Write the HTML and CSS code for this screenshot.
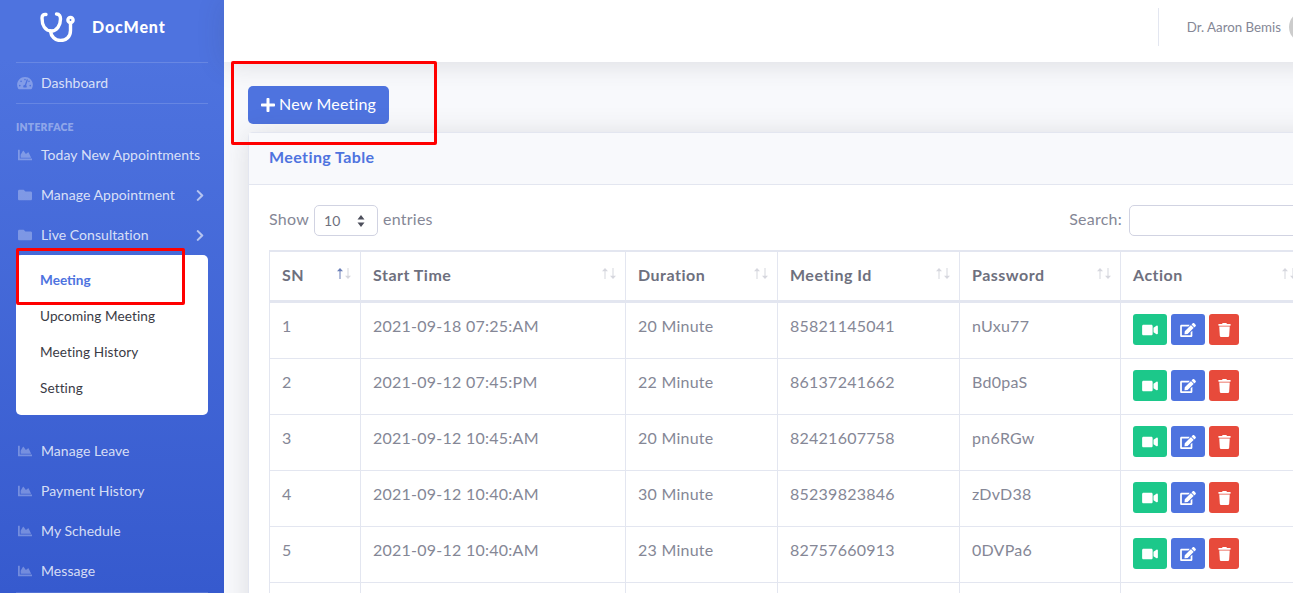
FILE: index.html
```html
<!DOCTYPE html>
<html>
<head>
<title>DocMent - Meeting</title>
<link rel="stylesheet" href="styles.css">
</head>
<body>
<svg class="sprite" xmlns="http://www.w3.org/2000/svg">
    <symbol id="i-gauge" viewBox="0 0 576 512"><path d="M288 32C128.94 32 0 160.94 0 320c0 52.8 14.25 102.26 39.06 144.8 5.61 9.62 16.3 15.2 27.44 15.2h443c11.14 0 21.83-5.58 27.44-15.2C561.75 422.26 576 372.8 576 320c0-159.06-128.94-288-288-288zm0 64c14.71 0 26.58 10.13 30.32 23.65-1.11 2.26-2.64 4.23-3.45 6.67l-9.22 27.67c-5.13 3.49-10.97 6.01-17.64 6.01-17.67 0-32-14.33-32-32S270.33 96 288 96zM96 384c-17.67 0-32-14.33-32-32s14.33-32 32-32 32 14.33 32 32-14.33 32-32 32zm48-160c-17.67 0-32-14.33-32-32s14.33-32 32-32 32 14.33 32 32-14.33 32-32 32zm246.77-72.41l-61.33 184C343.13 347.33 352 364.54 352 384c0 11.72-3.38 22.55-8.88 32H232.88c-5.5-9.45-8.88-20.28-8.88-32 0-33.94 26.5-61.43 59.9-63.59l61.34-184.01c4.17-12.56 17.73-19.45 30.36-15.17 12.57 4.19 19.35 17.79 15.17 30.36zm14.66 57.2l15.52-46.55c3.47-1.29 7.13-2.23 11.05-2.23 17.67 0 32 14.33 32 32s-14.33 32-32 32c-11.38-.01-20.89-6.28-26.57-15.22zM480 384c-17.67 0-32-14.33-32-32s14.33-32 32-32 32 14.33 32 32-14.33 32-32 32z"/></symbol>
    <symbol id="i-chart" viewBox="0 0 512 512"><path d="M500 384c6.6 0 12 5.4 12 12v40c0 6.6-5.4 12-12 12H12c-6.6 0-12-5.4-12-12V76c0-6.6 5.4-12 12-12h40c6.6 0 12 5.4 12 12v308h436zM372.7 159.5L288 216l-85.3-113.7c-5.1-6.8-15.5-6.3-19.9 1L96 248v104h384l-89.9-187.8c-3.2-6.5-11.4-8.7-17.4-4.7z"/></symbol>
    <symbol id="i-folder" viewBox="0 0 512 512"><path d="M464 128H272l-64-64H48C21.49 64 0 85.49 0 112v288c0 26.51 21.49 48 48 48h416c26.51 0 48-21.49 48-48V176c0-26.51-21.49-48-48-48z"/></symbol>
    <symbol id="i-chevron" viewBox="0 0 320 512"><path d="M285.476 272.971L91.132 467.314c-9.373 9.373-24.569 9.373-33.941 0l-22.667-22.667c-9.357-9.357-9.375-24.522-.04-33.901L188.505 256 34.484 101.255c-9.335-9.379-9.317-24.544.04-33.901l22.667-22.667c9.373-9.373 24.569-9.373 33.941 0L285.475 239.03c9.373 9.372 9.373 24.568.001 33.941z"/></symbol>
    <symbol id="i-plus" viewBox="0 0 448 512"><path d="M416 208H272V64c0-17.67-14.33-32-32-32h-32c-17.67 0-32 14.33-32 32v144H32c-17.67 0-32 14.33-32 32v32c0 17.67 14.33 32 32 32h144v144c0 17.67 14.33 32 32 32h32c17.67 0 32-14.33 32-32V304h144c17.67 0 32-14.33 32-32v-32c0-17.67-14.33-32-32-32z"/></symbol>
    <symbol id="i-video" viewBox="0 0 576 512"><path d="M336.2 64H47.8C21.4 64 0 85.4 0 111.8v288.4C0 426.6 21.4 448 47.8 448h288.4c26.4 0 47.8-21.4 47.8-47.8V111.8c0-26.4-21.4-47.8-47.8-47.8zm189.4 37.7L416 177.3v157.4l109.6 75.5c21.2 14.6 50.4-.3 50.4-25.8V127.5c0-25.4-29.1-40.4-50.4-25.8z"/></symbol>
    <symbol id="i-edit" viewBox="0 0 576 512"><path d="M402.6 83.2l90.2 90.2c3.8 3.8 3.8 10 0 13.8L274.4 405.6l-92.8 10.3c-12.4 1.4-22.9-9.1-21.5-21.5l10.3-92.8L388.8 83.2c3.8-3.8 10-3.8 13.8 0zm162-22.9l-48.8-48.8c-15.2-15.2-39.9-15.2-55.2 0l-35.4 35.4c-3.8 3.8-3.8 10 0 13.8l90.2 90.2c3.8 3.8 10 3.8 13.8 0l35.4-35.4c15.2-15.3 15.2-40 0-55.2zM384 346.2V448H64V128h229.8c3.2 0 6.2-1.3 8.5-3.5l40-40c7.6-7.6 2.2-20.5-8.5-20.5H48C21.5 64 0 85.5 0 112v352c0 26.5 21.5 48 48 48h352c26.5 0 48-21.5 48-48V306.2c0-10.7-12.9-16-20.5-8.5l-40 40c-2.2 2.3-3.5 5.3-3.5 8.5z"/></symbol>
    <symbol id="i-trash" viewBox="0 0 448 512"><path d="M432 32H312l-9.4-18.7A24 24 0 0 0 281.1 0H166.8a23.72 23.72 0 0 0-21.4 13.3L136 32H16A16 16 0 0 0 0 48v32a16 16 0 0 0 16 16h416a16 16 0 0 0 16-16V48a16 16 0 0 0-16-16zM53.2 467a48 48 0 0 0 47.9 45h245.8a48 48 0 0 0 47.9-45L416 128H32z"/></symbol>
    <symbol id="i-up" viewBox="0 0 6 11"><path d="M3 0l3 3.200H3.500V11h-1V3.200H0z"/></symbol>
    <symbol id="i-down" viewBox="0 0 6 11"><path d="M3 11L0 7.800h2.500V0h1v7.800H6z"/></symbol>
</svg>

<div class="wrapper">
    <nav class="sidebar">
        <a class="brand">
            <svg class="brand-logo" viewBox="0 0 36 30" fill="none" stroke="#fff" stroke-width="3.400" stroke-linecap="round"><path d="M6 2.500C3.500 2 2 3.500 2 6c0 7 3 13 9.500 13 5.500 0 9-6 9-12 0-3-1-5-4-5"/><path d="M10.500 19c.5 5.500 4.500 9.500 10 9.500 6 0 10-4 10-10v-7"/><circle cx="30.500" cy="8" r="2.600"/></svg>
            <span class="brand-text">DocMent</span>
        </a>
        <hr class="side-rule">
        <a class="side-link side-link-dash"><svg class="side-icon"><use href="#i-gauge"/></svg><span>Dashboard</span></a>
        <hr class="side-rule">
        <div class="side-heading">INTERFACE</div>
        <a class="side-link"><svg class="side-icon"><use href="#i-chart"/></svg><span>Today New Appointments</span></a>
        <a class="side-link"><svg class="side-icon"><use href="#i-folder"/></svg><span>Manage Appointment</span><svg class="side-arrow"><use href="#i-chevron"/></svg></a>
        <a class="side-link"><svg class="side-icon"><use href="#i-folder"/></svg><span>Live Consultation</span><svg class="side-arrow"><use href="#i-chevron"/></svg></a>
        <div class="side-sub">
            <a class="sub-link active">Meeting</a>
            <a class="sub-link">Upcoming Meeting</a>
            <a class="sub-link">Meeting History</a>
            <a class="sub-link">Setting</a>
        </div>
        <a class="side-link"><svg class="side-icon"><use href="#i-chart"/></svg><span>Manage Leave</span></a>
        <a class="side-link"><svg class="side-icon"><use href="#i-chart"/></svg><span>Payment History</span></a>
        <a class="side-link"><svg class="side-icon"><use href="#i-chart"/></svg><span>My Schedule</span></a>
        <a class="side-link"><svg class="side-icon"><use href="#i-chart"/></svg><span>Message</span></a>
        <hr class="side-rule side-rule-end">
    </nav>

    <div class="main">
        <header class="topbar">
            <div class="topbar-rule"></div>
            <span class="user-name">Dr. Aaron Bemis</span>
            <div class="avatar"></div>
        </header>
        <div class="content">
            <button class="btn-new"><svg class="btn-new-icon"><use href="#i-plus"/></svg><span class="btn-new-text">New Meeting</span></button>
            <div class="card">
                <div class="card-head">Meeting Table</div>
                <div class="card-body">
                    <div class="table-tools">
                        <label class="tool">Show
                            <span class="fake-select"><span>10</span>
                                <svg class="select-carets" viewBox="0 0 8 12"><path d="M4 0l3.500 4.500H.5zM4 12L.5 7.500h7z"/></svg>
                            </span>
                            entries</label>
                        <label class="tool tool-search">Search: <input class="search-box" type="text"></label>
                    </div>
                    <table class="data">
                        <colgroup>
                            <col class="c-sn"><col class="c-time"><col class="c-dur"><col class="c-id"><col class="c-pass"><col class="c-act">
                        </colgroup>
                        <thead>
                            <tr>
                                <th><div class="th-in">SN<span class="sort"><svg class="on"><use href="#i-up"/></svg><svg><use href="#i-down"/></svg></span></div></th>
                                <th><div class="th-in">Start Time<span class="sort"><svg><use href="#i-up"/></svg><svg><use href="#i-down"/></svg></span></div></th>
                                <th><div class="th-in">Duration<span class="sort"><svg><use href="#i-up"/></svg><svg><use href="#i-down"/></svg></span></div></th>
                                <th><div class="th-in">Meeting Id<span class="sort"><svg><use href="#i-up"/></svg><svg><use href="#i-down"/></svg></span></div></th>
                                <th><div class="th-in">Password<span class="sort"><svg><use href="#i-up"/></svg><svg><use href="#i-down"/></svg></span></div></th>
                                <th><div class="th-in">Action<span class="sort"><svg><use href="#i-up"/></svg><svg><use href="#i-down"/></svg></span></div></th>
                            </tr>
                        </thead>
                        <tbody>
                            <tr>
                                <td>1</td><td>2021-09-18 07:25:AM</td><td>20 Minute</td><td>85821145041</td><td>nUxu77</td>
                                <td><div class="acts"><a class="act act-go"><svg class="ic-video"><use href="#i-video"/></svg></a><a class="act act-edit"><svg class="ic-edit"><use href="#i-edit"/></svg></a><a class="act act-del"><svg class="ic-trash"><use href="#i-trash"/></svg></a></div></td>
                            </tr>
                            <tr>
                                <td>2</td><td>2021-09-12 07:45:PM</td><td>22 Minute</td><td>86137241662</td><td>Bd0paS</td>
                                <td><div class="acts"><a class="act act-go"><svg class="ic-video"><use href="#i-video"/></svg></a><a class="act act-edit"><svg class="ic-edit"><use href="#i-edit"/></svg></a><a class="act act-del"><svg class="ic-trash"><use href="#i-trash"/></svg></a></div></td>
                            </tr>
                            <tr>
                                <td>3</td><td>2021-09-12 10:45:AM</td><td>20 Minute</td><td>82421607758</td><td>pn6RGw</td>
                                <td><div class="acts"><a class="act act-go"><svg class="ic-video"><use href="#i-video"/></svg></a><a class="act act-edit"><svg class="ic-edit"><use href="#i-edit"/></svg></a><a class="act act-del"><svg class="ic-trash"><use href="#i-trash"/></svg></a></div></td>
                            </tr>
                            <tr>
                                <td>4</td><td>2021-09-12 10:40:AM</td><td>30 Minute</td><td>85239823846</td><td>zDvD38</td>
                                <td><div class="acts"><a class="act act-go"><svg class="ic-video"><use href="#i-video"/></svg></a><a class="act act-edit"><svg class="ic-edit"><use href="#i-edit"/></svg></a><a class="act act-del"><svg class="ic-trash"><use href="#i-trash"/></svg></a></div></td>
                            </tr>
                            <tr>
                                <td>5</td><td>2021-09-12 10:40:AM</td><td>23 Minute</td><td>82757660913</td><td>0DVPa6</td>
                                <td><div class="acts"><a class="act act-go"><svg class="ic-video"><use href="#i-video"/></svg></a><a class="act act-edit"><svg class="ic-edit"><use href="#i-edit"/></svg></a><a class="act act-del"><svg class="ic-trash"><use href="#i-trash"/></svg></a></div></td>
                            </tr>
                            <tr class="row-empty"><td></td><td></td><td></td><td></td><td></td><td></td></tr>
                        </tbody>
                    </table>
                </div>
            </div>
        </div>
    </div>
</div>

<div class="mark mark-btn"></div>
<div class="mark mark-menu"></div>
</body>
</html>
```

FILE: styles.css
```css
html, body {
    margin: 0;
    height: 100%;
    overflow: hidden;
}
body {
    font-family: Lato, "Noto Sans", sans-serif;
    font-size: 16px;
    line-height: 24px;
    color: #858796;
    background-color: #f8f9fc;
}
.sprite {
    display: none;
}
.wrapper {
    display: flex;
    width: 1340px;
    height: 593px;
    overflow: hidden;
}

/* sidebar */
.sidebar {
    flex: 0 0 224px;
    height: 593px;
    box-sizing: border-box;
    padding: 0 16px;
    overflow: hidden;
    background-image: linear-gradient(180deg, #4e73df 10%, #365ace 100%);
}
.brand {
    display: flex;
    align-items: center;
    height: 62px;
    padding: 0 0 8px 24px;
    box-sizing: border-box;
}
.brand-logo {
    width: 36px;
    height: 30px;
}
.brand-text {
    margin-left: 16px;
    font-size: 16px;
    font-weight: 900;
    letter-spacing: .85px;
    color: #fff;
}
.side-rule {
    margin: 0;
    border: 0;
    border-top: 1px solid rgba(255, 255, 255, .15);
}
.side-rule-end {
    margin-top: 1px;
}
.side-link {
    display: flex;
    align-items: center;
    height: 40px;
    font-size: 14px;
    letter-spacing: .05px;
    color: rgba(255, 255, 255, .8);
}
.side-icon {
    flex: none;
    width: 16px;
    height: 14px;
    margin: 0 8px 0 1px;
    fill: rgba(255, 255, 255, .3);
}
.side-arrow {
    width: 10px;
    height: 13px;
    margin-left: auto;
    margin-right: 3px;
    fill: rgba(255, 255, 255, .6);
}
.side-heading {
    margin-top: 17px;
    height: 12px;
    line-height: 12px;
    font-size: 10.400px;
    font-weight: 800;
    letter-spacing: .25px;
    color: rgba(255, 255, 255, .4);
}
.side-heading + .side-link {
    margin-top: 2px;
}
.side-sub {
    margin: 0 0 16px;
    padding: 8px 0;
    background-color: #fff;
    border-radius: 5px;
}
.sub-link {
    display: block;
    height: 36px;
    line-height: 34px;
    padding-left: 24px;
    font-size: 13.600px;
    letter-spacing: .1px;
    color: #3a3b45;
}
.sub-link.active {
    color: #4e73df;
    font-weight: 700;
    letter-spacing: 0;
}

/* top bar and page */
.main {
    flex: 1;
    min-width: 0;
    display: flex;
    flex-direction: column;
}
.topbar {
    position: relative;
    z-index: 1;
    flex: 0 0 62px;
    display: flex;
    align-items: center;
    justify-content: flex-end;
    padding: 0 19px 8px 0;
    box-sizing: border-box;
    background-color: #fff;
    box-shadow: 0 2px 28px rgba(58, 59, 69, .15);
}
.topbar-rule {
    width: 1px;
    height: 38px;
    margin-right: 28px;
    background-color: #e3e6f0;
}
.user-name {
    font-size: 13.300px;
    color: #858796;
}
.avatar {
    width: 32px;
    height: 32px;
    margin-left: 8px;
    border-radius: 50%;
    background-color: #cccccc;
}
.content {
    padding: 24px 0 0 24px;
}
.btn-new {
    display: flex;
    align-items: center;
    height: 38px;
    width: 141px;
    padding: 0 0 0 13px;
    border: 0;
    border-radius: 5px;
    font-family: inherit;
    font-size: 16px;
    letter-spacing: .2px;
    color: #fff;
    background-color: #4e73df;
}
.btn-new-icon {
    width: 14px;
    height: 16px;
    margin-right: 4px;
    fill: #fff;
}
.btn-new-text {
    margin-top: -3px;
}
.card {
    margin-top: 8px;
    background-color: #fff;
    border: 1px solid #e3e6f0;
    border-right: 0;
    border-radius: 5px 0 0 5px;
    box-shadow: 0 2px 28px rgba(58, 59, 69, .15);
}
.card-head {
    height: 52px;
    padding: 12px 20px 0;
    box-sizing: border-box;
    font-weight: 700;
    letter-spacing: .4px;
    color: #4e73df;
    background-color: #f8f9fc;
    border-bottom: 1px solid #e3e6f0;
}
.card-body {
    padding: 20px 0 0 20px;
}
.table-tools {
    display: flex;
    justify-content: space-between;
    height: 31px;
    margin-bottom: 14px;
}
.tool {
    display: flex;
    align-items: center;
    gap: 5px;
    margin-top: -3px;
    letter-spacing: .25px;
}
.tool-search {
    gap: 7px;
}
.fake-select {
    display: flex;
    align-items: center;
    justify-content: space-between;
    width: 64px;
    height: 31px;
    margin-top: 3px;
    padding: 0 12px 0 9px;
    box-sizing: border-box;
    font-size: 14px;
    color: #6e707e;
    border: 1px solid #d1d3e2;
    border-radius: 5px;
    background-color: #fff;
}
.select-carets {
    width: 8px;
    height: 12px;
    fill: #4d4f5c;
}
.search-box {
    width: 211px;
    height: 31px;
    margin-top: 3px;
    padding: 0;
    box-sizing: border-box;
    border: 1px solid #d1d3e2;
    border-radius: 5px;
    background-color: #fff;
}

/* table */
.data {
    width: 1036px;
    table-layout: fixed;
    border-collapse: collapse;
}
.c-sn { width: 91px; }
.c-time { width: 265px; }
.c-dur { width: 152px; }
.c-id { width: 182px; }
.c-pass { width: 161px; }
.c-act { width: 185px; }
.data th, .data td {
    padding: 11px 12px 13px;
    text-align: left;
    vertical-align: top;
    border: 1px solid #e3e6f0;
}
.data td {
    letter-spacing: .25px;
}
.data th {
    height: 24px;
    font-weight: 700;
    letter-spacing: .5px;
    color: #6e707e;
    border-top-width: 2px;
    border-bottom-width: 3px;
}
.th-in {
    display: flex;
    justify-content: space-between;
}
.sort {
    display: flex;
    gap: 2px;
    margin: 5px -3px 0 0;
}
.sort svg {
    width: 6px;
    height: 11px;
    fill: #d6d7de;
}
.sort svg.on {
    fill: #6b7fb8;
}
.row-empty td {
    height: 24px;
}
.acts {
    display: flex;
    gap: 4px;
}
.act {
    display: flex;
    align-items: center;
    justify-content: center;
    width: 34px;
    height: 31px;
    border-radius: 3px;
}
.act svg {
    fill: #fff;
}
.act-go { background-color: #1cc88a; }
.act-edit { background-color: #4e73df; }
.act-del { width: 30px; background-color: #e74a3b; }
.ic-video { width: 16px; height: 14px; }
.ic-edit { width: 16px; height: 14px; }
.ic-trash { width: 13px; height: 14px; }

/* red annotation boxes over the shot */
.mark {
    position: absolute;
    z-index: 5;
    box-sizing: border-box;
    border: 3px solid #ff0000;
    border-radius: 2px;
}
.mark-btn {
    left: 231px;
    top: 61px;
    width: 206px;
    height: 84px;
}
.mark-menu {
    left: 16px;
    top: 248px;
    width: 169px;
    height: 57px;
}
```
